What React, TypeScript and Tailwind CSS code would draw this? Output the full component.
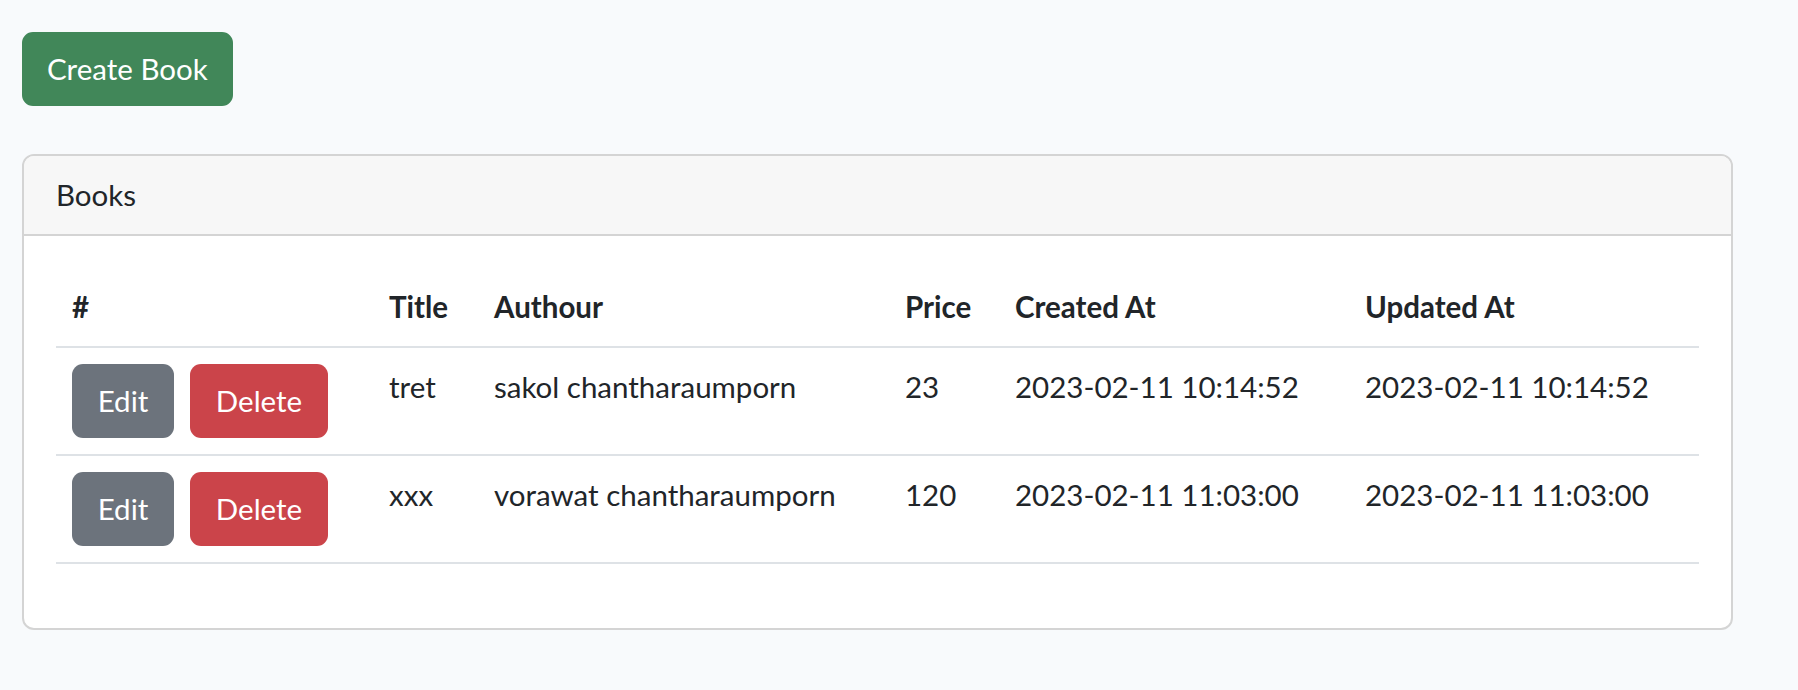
const books = [
  { id: 1, title: 'tret', author: 'sakol chantharaumporn', price: 23, created: '2023-02-11 10:14:52', updated: '2023-02-11 10:14:52' },
  { id: 2, title: 'xxx', author: 'vorawat chantharaumporn', price: 120, created: '2023-02-11 11:03:00', updated: '2023-02-11 11:03:00' },
];

export default function App() {
  return (
    <div className="min-h-screen bg-[#f8fafc] font-['Lato',sans-serif] text-[29.5px] leading-[46px] text-[#212529]">
      <div className="pl-[22px] pr-[65px] pt-[32px]">
        <button className="h-[74px] rounded-[11px] border-2 border-[#418759] bg-[#418759] px-[23px] text-white">
          Create Book
        </button>

        <div className="mt-[48px] w-[1711px] rounded-[12px] border-2 border-[#d4d4d4] bg-white">
          <div className="rounded-t-[10px] border-b-2 border-[#d4d4d4] bg-[#f7f7f7] px-[32px] py-[16px]">Books</div>
          <div className="p-[32px]">
            <table className="mb-[32px] w-full table-fixed border-collapse text-left">
              <colgroup>
                <col className="w-[317px]" />
                <col className="w-[105px]" />
                <col className="w-[411px]" />
                <col className="w-[110px]" />
                <col className="w-[350px]" />
                <col className="w-[350px]" />
              </colgroup>
              <thead>
                <tr className="border-b-2 border-[#dee2e6]">
                  <th className="p-[16px] font-bold">#</th>
                  <th className="p-[16px] font-bold">Title</th>
                  <th className="p-[16px] font-bold">Authour</th>
                  <th className="p-[16px] font-bold">Price</th>
                  <th className="p-[16px] font-bold">Created At</th>
                  <th className="p-[16px] font-bold">Updated At</th>
                </tr>
              </thead>
              <tbody>
                {books.map((b) => (
                  <tr key={b.id} className="border-b-2 border-[#dee2e6] align-top">
                    <td className="p-[16px]">
                      <div className="flex gap-[16px]">
                        <button className="h-[74px] w-[102px] rounded-[11px] bg-[#6c737c] text-white">Edit</button>
                        <button className="h-[74px] w-[138px] rounded-[11px] bg-[#cb444a] text-white">Delete</button>
                      </div>
                    </td>
                    <td className="whitespace-nowrap p-[16px]">{b.title}</td>
                    <td className="whitespace-nowrap p-[16px]">{b.author}</td>
                    <td className="whitespace-nowrap p-[16px]">{b.price}</td>
                    <td className="whitespace-nowrap p-[16px]">{b.created}</td>
                    <td className="whitespace-nowrap p-[16px]">{b.updated}</td>
                  </tr>
                ))}
              </tbody>
            </table>
          </div>
        </div>
      </div>
    </div>
  );
}
